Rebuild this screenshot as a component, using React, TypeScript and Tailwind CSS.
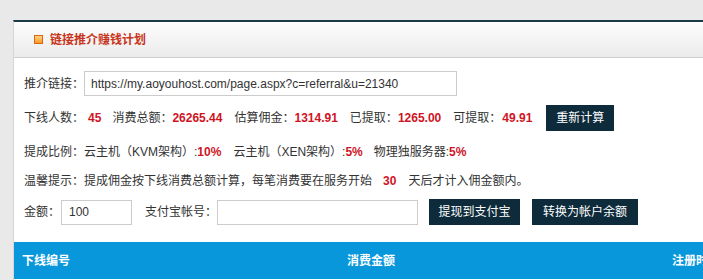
import React from "react";

const font = { fontFamily: '"Liberation Sans", Arial, "Noto Sans CJK SC", sans-serif' };

function Btn({ children, className = "" }: { children: React.ReactNode; className?: string }) {
  return (
    <div
      className={`h-[26px] flex items-center justify-center bg-[#0d2b3a] text-white text-[12px] leading-none ${className}`}
    >
      {children}
    </div>
  );
}

function Val({ children, className = "" }: { children: React.ReactNode; className?: string }) {
  return <span className={`text-[#d0141f] font-bold ${className}`}>{children}</span>;
}

export default function App() {
  return (
    <div
      className="w-[703px] h-[280px] overflow-hidden bg-[#e9e9e9] pt-[20px] pl-[13px] text-[12px] text-[#333]"
      style={font}
    >
      <div className="w-[720px] h-[300px] bg-white border-l border-[#d6d6d6] border-t-2 border-t-[#1c3a4a]">
        <div className="h-[36px] bg-gradient-to-b from-[#fdfdfd] to-[#ebebeb] border-b border-[#cfcfcf] flex items-center pl-[20px]">
          <div className="w-[9px] h-[9px] border border-[#dd6511] bg-gradient-to-b from-[#ffd37d] to-[#f59a1f]" />
          <span className="ml-[7px] font-bold text-[#c8341b] leading-none">链接推介赚钱计划</span>
        </div>

        <div className="pl-[10px]">
          <div className="mt-[13px] h-[25px] flex items-center">
            <span className="w-[60px]">推介链接：</span>
            <div className="w-[373px] h-[25px] border border-[#cccccc] flex items-center pl-[6px] text-[#333]">
              https://my.aoyouhost.com/page.aspx?c=referral&amp;u=21340
            </div>
          </div>

          <div className="mt-[9px] h-[26px] flex items-center whitespace-nowrap">
            <span>下线人数：</span>
            <Val className="ml-[4px]">45</Val>
            <span className="ml-[11px]">消费总额：</span>
            <Val>26265.44</Val>
            <span className="ml-[12px]">估算佣金：</span>
            <Val>1314.91</Val>
            <span className="ml-[12px]">已提取：</span>
            <Val>1265.00</Val>
            <span className="ml-[12px]">可提取：</span>
            <Val className="ml-[1px]">49.91</Val>
            <Btn className="ml-[14px] w-[68px]">重新计算</Btn>
          </div>

          <div className="mt-[11px] h-[20px] flex items-center whitespace-nowrap">
            <span>提成比例：云主机（KVM架构）:</span>
            <Val>10%</Val>
            <span className="ml-[12px]">云主机（XEN架构）:</span>
            <Val>5%</Val>
            <span className="ml-[11px]">物理独服务器:</span>
            <Val>5%</Val>
          </div>

          <div className="mt-[9px] h-[20px] flex items-center whitespace-nowrap">
            <span>温馨提示：提成佣金按下线消费总额计算，每笔消费要在服务开始</span>
            <span className="ml-[11px]">
              <Val>30</Val>
            </span>
            <span className="ml-[12px]">天后才计入佣金额内。</span>
          </div>

          <div className="mt-[8px] h-[26px] flex items-center whitespace-nowrap">
            <span className="w-[37px]">金额：</span>
            <div className="w-[71px] h-[25px] border border-[#cccccc] flex items-center pl-[7px]">100</div>
            <span className="ml-[13px] w-[72px]">支付宝帐号：</span>
            <div className="w-[201px] h-[25px] border border-[#cccccc]" />
            <Btn className="ml-[11px] w-[91px]">提现到支付宝</Btn>
            <Btn className="ml-[12px] w-[106px]">转换为帐户余额</Btn>
          </div>
        </div>

        <div className="mt-[17px] h-[37px] bg-[#0897db] flex items-center text-white font-bold whitespace-nowrap">
          <div className="w-[325px] pl-[8px]">下线编号</div>
          <div className="w-[325px] pl-[8px]">消费金额</div>
          <div className="pl-[8px]">注册时间</div>
        </div>
      </div>
    </div>
  );
}
